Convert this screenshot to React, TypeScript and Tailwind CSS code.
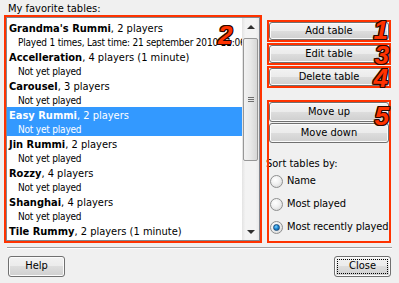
import { ReactNode } from 'react'

const tables = [
  { name: "Grandma's Rummi", info: '2 players', sub: 'Played 1 times, Last time: 21 september 2010 11:06' },
  { name: 'Accelleration', info: '4 players (1 minute)', sub: 'Not yet played' },
  { name: 'Carousel', info: '3 players', sub: 'Not yet played' },
  { name: 'Easy Rummi', info: '2 players', sub: 'Not yet played', selected: true },
  { name: 'Jin Rummi', info: '2 players', sub: 'Not yet played' },
  { name: 'Rozzy', info: '4 players', sub: 'Not yet played' },
  { name: 'Shanghai', info: '4 players', sub: 'Not yet played' },
  { name: 'Tile Rummy', info: '2 players (1 minute)', sub: 'Not yet played' },
]

const btn =
  'flex items-center justify-center rounded-[3px] border border-[#707070] bg-[linear-gradient(#f2f2f2_0%,#ebebeb_50%,#dddddd_50%,#cfcfcf_100%)] shadow-[inset_0_0_0_1px_#fbfbfb] text-black'

// red annotation frame + number drawn over a region
function Marked({ children, className, num, numClass }: { children: ReactNode; className?: string; num?: string; numClass?: string }) {
  return (
    <div className={`relative ${className ?? ''}`}>
      {children}
      <div className="pointer-events-none absolute inset-0 z-10 border-2 border-[#ff3300]" />
      {num && (
        <span
          className={`pointer-events-none absolute z-20 font-['Liberation_Sans',sans-serif] text-[26px] leading-none font-bold italic text-[#ff3300] [text-shadow:1px_0_#2a0800,-1px_0_#2a0800,0_1px_#2a0800,0_-1px_#2a0800,1px_1px_#2a0800,-1px_-1px_#2a0800,1px_-1px_#2a0800,-1px_1px_#2a0800] ${numClass ?? ''}`}
        >
          {num}
        </span>
      )}
    </div>
  )
}

function Radio({ label, checked }: { label: string; checked?: boolean }) {
  return (
    <div className="flex h-[23px] items-center whitespace-nowrap">
      <div className="ml-[3px] flex h-[13px] w-[13px] shrink-0 items-center justify-center rounded-full border border-[#8e8f8f] bg-[radial-gradient(circle_at_40%_35%,#ffffff_0%,#f0f0f0_45%,#cfcfcf_100%)]">
        {checked && (
          <div className="h-[7px] w-[7px] rounded-full border border-[#1b4d7c] bg-[radial-gradient(circle_at_40%_35%,#7fd3ff_0%,#1e8ad6_45%,#0c4f8a_100%)]" />
        )}
      </div>
      <span className="ml-[4px] tracking-[-0.1px]">{label}</span>
    </div>
  )
}

export default function App() {
  return (
    <div className="flex h-[283px] w-[399px] flex-col overflow-hidden bg-[#f0f0f0] font-['DejaVu_Sans_Condensed','DejaVu_Sans',sans-serif] text-[11px] text-black [font-stretch:condensed]">
      <div className="h-[15px] pt-[2px] pl-[8px] leading-[13px]">My favorite tables:</div>

      <div className="flex">
        <Marked className="ml-[4px] h-[228px] w-[258px] p-[2px]" num="2" numClass="left-[214px] top-[7px]">
          <div className="flex h-full border border-[#828790] bg-white">
            <div className="flex-1 overflow-hidden pt-[2px]">
              {tables.map((t) => (
                <div
                  key={t.name}
                  className={`h-[29px] px-[2px] pt-[2px] whitespace-nowrap ${t.selected ? 'bg-[#3399ff] text-white' : ''}`}
                >
                  <div className="leading-[14px]">
                    <span className="font-bold">{t.name}</span>, {t.info}
                  </div>
                  <div className="pl-[9px] text-[10px] leading-[13px] tracking-[-0.2px]">{t.sub}</div>
                </div>
              ))}
            </div>
            {/* scrollbar */}
            <div className="flex w-[17px] flex-col bg-[linear-gradient(90deg,#e3e3e3,#f3f3f3_20%,#f3f3f3_80%,#e9e9e9)]">
              <div className="flex h-[17px] items-center justify-center">
                <div className="h-0 w-0 border-x-[4px] border-b-[4px] border-x-transparent border-b-[#303030]" />
              </div>
              <div className="mx-[1px] mt-[3px] flex h-[123px] flex-col items-center justify-center gap-[1px] rounded-[2px] border border-[#979797] bg-[linear-gradient(90deg,#f2f2f2,#e8e8e8_50%,#d6d6d6)]">
                <div className="h-[1px] w-[6px] bg-[#6e6e6e]" />
                <div className="h-[1px] w-[6px] bg-[#6e6e6e]" />
                <div className="h-[1px] w-[6px] bg-[#6e6e6e]" />
              </div>
              <div className="flex-1" />
              <div className="flex h-[17px] items-center justify-center">
                <div className="h-0 w-0 border-x-[4px] border-t-[4px] border-x-transparent border-t-[#303030]" />
              </div>
            </div>
          </div>
        </Marked>

        <div className="ml-[5px] flex w-[124px] flex-col pt-[5px]">
          <Marked className="h-[22px] p-[2px]" num="1" numClass="right-[3px] top-[-3px]">
            <div className={`${btn} h-full`}>Add table</div>
          </Marked>
          <Marked className="mt-[1px] h-[22px] p-[2px]" num="3" numClass="right-[2px] top-[-1px]">
            <div className={`${btn} h-full`}>Edit table</div>
          </Marked>
          <Marked className="mt-[1px] h-[22px] p-[2px]" num="4" numClass="right-[3px] top-[-1px]">
            <div className={`${btn} h-full`}>Delete table</div>
          </Marked>

          <Marked className="mt-[12px] h-[143px] px-[2px] pt-[2px]" num="5" numClass="right-[2px] top-[3px]">
            <div className={`${btn} h-[20px]`}>Move up</div>
            <div className={`${btn} mt-[1px] h-[20px]`}>Move down</div>
            <div className="mt-[14px] ml-[-3px] leading-[13px]">Sort tables by:</div>
            <div className="ml-[-2px]">
              <Radio label="Name" />
              <Radio label="Most played" />
              <Radio label="Most recently played" checked />
            </div>
          </Marked>
        </div>
      </div>

      <div className="mt-[4px] ml-[7px] h-[2px] w-[385px] border-t border-b border-t-[#a0a0a0] border-b-white" />

      <div className="mt-[7px] flex justify-between px-[8px]">
        <div className={`${btn} h-[21px] w-[57px]`}>Help</div>
        <div className={`${btn} relative h-[21px] w-[57px] border-[#3c7fb1] shadow-[inset_0_0_0_1px_#c4e5f6]`}>
          Close
          <div className="pointer-events-none absolute inset-[2px] border border-dotted border-black" />
        </div>
      </div>
    </div>
  )
}
